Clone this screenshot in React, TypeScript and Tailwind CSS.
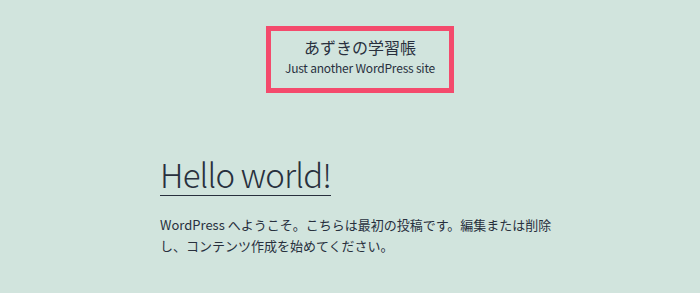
export default function App() {
  return (
    <div
      className="w-[700px] h-[293px] overflow-hidden bg-[#d1e4dd] text-[#28303d]"
      style={{ fontFamily: '"Noto Sans CJK JP", sans-serif' }}
    >
      <header className="pt-[26px] pl-[266px]">
        <div className="w-[188px] h-[67px] border-[5px] border-[#f44a6c] flex flex-col items-center pt-[5px]">
          <div className="text-[16px] leading-[22px]">あずきの学習帳</div>
          <div className="text-[12px] leading-[16px] mt-[2px] tracking-[-0.2px]">Just another WordPress site</div>
        </div>
      </header>
      <main className="pl-[160px] pt-[61px]">
        <h1 className="text-[33px] leading-[40px] font-light inline-block border-b border-[#28303d] pb-[1px] tracking-[-0.8px]">
          Hello world!
        </h1>
        <p className="mt-[18px] w-[394px] text-[13px] leading-[21px]">
          WordPress へようこそ。こちらは最初の投稿です。編集または削除し、コンテンツ作成を始めてください。
        </p>
      </main>
    </div>
  );
}
